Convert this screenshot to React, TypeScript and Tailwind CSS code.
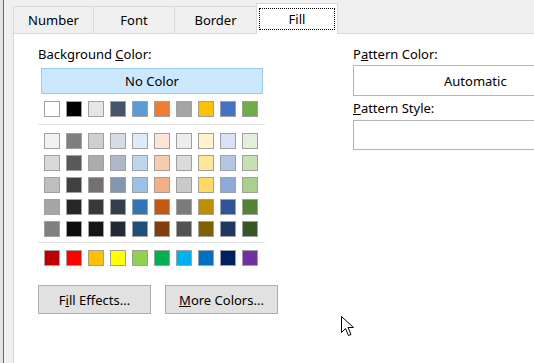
import React from "react";

const topRow = ["#ffffff", "#000000", "#e7e6e6", "#44546a", "#5b9bd5", "#ed7d31", "#a5a5a5", "#ffc000", "#4472c4", "#70ad47"];
const shades: string[][] = [
  ["#f2f2f2", "#7f7f7f", "#d0cece", "#d6dce4", "#ddebf7", "#fce4d6", "#ededed", "#fff2cc", "#d9e1f2", "#e2efda"],
  ["#d9d9d9", "#595959", "#aeabab", "#adb9ca", "#bdd7ee", "#f8cbad", "#dbdbdb", "#ffe699", "#b4c6e7", "#c6e0b4"],
  ["#bfbfbf", "#404040", "#757171", "#8497b0", "#9bc2e6", "#f4b084", "#c9c9c9", "#ffd966", "#8ea9db", "#a9d08e"],
  ["#a6a6a6", "#262626", "#3a3838", "#333f4f", "#2f75b5", "#c65911", "#7b7b7b", "#bf8f00", "#305496", "#548235"],
  ["#808080", "#0d0d0d", "#171616", "#222b35", "#1f4e78", "#833c0c", "#525252", "#806000", "#203764", "#375623"],
];
const standard = ["#c00000", "#ff0000", "#ffc000", "#ffff00", "#92d050", "#00b050", "#00b0f0", "#0070c0", "#002060", "#7030a0"];

function SwatchRow({ colors }: { colors: string[] }) {
  return (
    <div className="flex gap-[6px] ml-[6px]">
      {colors.map((c, i) => (
        <div key={i} className="w-[16px] h-[16px] border border-[#a0a0a0]" style={{ backgroundColor: c }} />
      ))}
    </div>
  );
}

export default function App() {
  return (
    <div className="relative w-[534px] h-[363px] overflow-hidden bg-[#f0f0f0] flex text-[13px] leading-[16px] text-black font-['Noto_Sans','Open_Sans',sans-serif]">
      {/* Excel remnant on the left */}
      <div className="w-[13px] shrink-0 flex">
        <div className="w-[3px] bg-[#e4e4e4]" />
        <div className="w-[1px] bg-[#6a6a6a]" />
        <div className="flex-1 bg-[#f0f0f0]" />
      </div>

      <div className="flex-1 flex flex-col">
        {/* Tabs */}
        <div className="h-[33px] flex items-end relative">
          <div className="flex items-end h-[28px] -mb-px">
            <div className="w-[80px] h-[28px] border-t border-l border-[#d9d9d9] flex items-center justify-center pb-[1px]">Number</div>
            <div className="w-[81px] h-[28px] border-t border-l border-[#d9d9d9] flex items-center justify-center pb-[1px]">Font</div>
            <div className="w-[82px] h-[28px] border-t border-l border-[#d9d9d9] flex items-center justify-center pb-[1px]">Border</div>
            <div className="w-[82px] h-[31px] border-t border-l border-r border-[#d9d9d9] bg-white flex items-center justify-center relative z-10">
              <div className="w-[76px] h-[22px] border border-dotted border-black flex items-center justify-center">Fill</div>
            </div>
          </div>
        </div>

        {/* Panel */}
        <div className="flex-1 bg-white border-l border-t border-[#d9d9d9] flex pl-[24px]">
          {/* Left column */}
          <div className="w-[315px] shrink-0 flex flex-col pt-[12px]">
            <div>
              Background <span className="underline">C</span>olor:
            </div>
            <div className="mt-[6px] ml-[3px] w-[222px] h-[26px] bg-[#cce8ff] border border-[#99c9ef] flex items-center justify-center">
              No Color
            </div>
            <div className="mt-[7px]">
              <SwatchRow colors={topRow} />
            </div>
            <div className="mt-[7px] w-[227px] h-[1px] bg-[#e3e3e3]" />
            <div className="mt-[8px] flex flex-col gap-[6px]">
              {shades.map((r, i) => (
                <SwatchRow key={i} colors={r} />
              ))}
            </div>
            <div className="mt-[5px] w-[227px] h-[1px] bg-[#e3e3e3]" />
            <div className="mt-[7px]">
              <SwatchRow colors={standard} />
            </div>
            <div className="mt-[19px] flex gap-[14px]">
              <div className="w-[113px] h-[29px] bg-[#e1e1e1] border border-[#adadad] flex items-center justify-center">
                <span>F<span className="underline">i</span>ll Effects...</span>
              </div>
              <div className="w-[113px] h-[29px] bg-[#e1e1e1] border border-[#adadad] flex items-center justify-center">
                <span><span className="underline">M</span>ore Colors...</span>
              </div>
            </div>
          </div>

          {/* Right column */}
          <div className="w-[220px] shrink-0 flex flex-col pt-[12px]">
            <div>
              P<span className="underline">a</span>ttern Color:
            </div>
            <div className="mt-[3px] h-[31px] border border-[#b4b4b4] bg-white flex items-center pl-[90px]">
              Automatic
            </div>
            <div className="mt-[4px]">
              <span className="underline">P</span>attern Style:
            </div>
            <div className="mt-[4px] h-[30px] border border-[#b4b4b4] bg-white" />
          </div>
        </div>
      </div>

      {/* Mouse cursor */}
      <svg className="absolute left-[341px] top-[316px]" width="14" height="22" viewBox="0 0 14 22">
        <path d="M0.5 0.5 L0.5 16.5 L4.5 12.5 L7.5 19.5 L10 18.5 L7 11.5 L12.5 11.5 Z" fill="#ffffff" stroke="#000000" strokeWidth="1" />
      </svg>
    </div>
  );
}
